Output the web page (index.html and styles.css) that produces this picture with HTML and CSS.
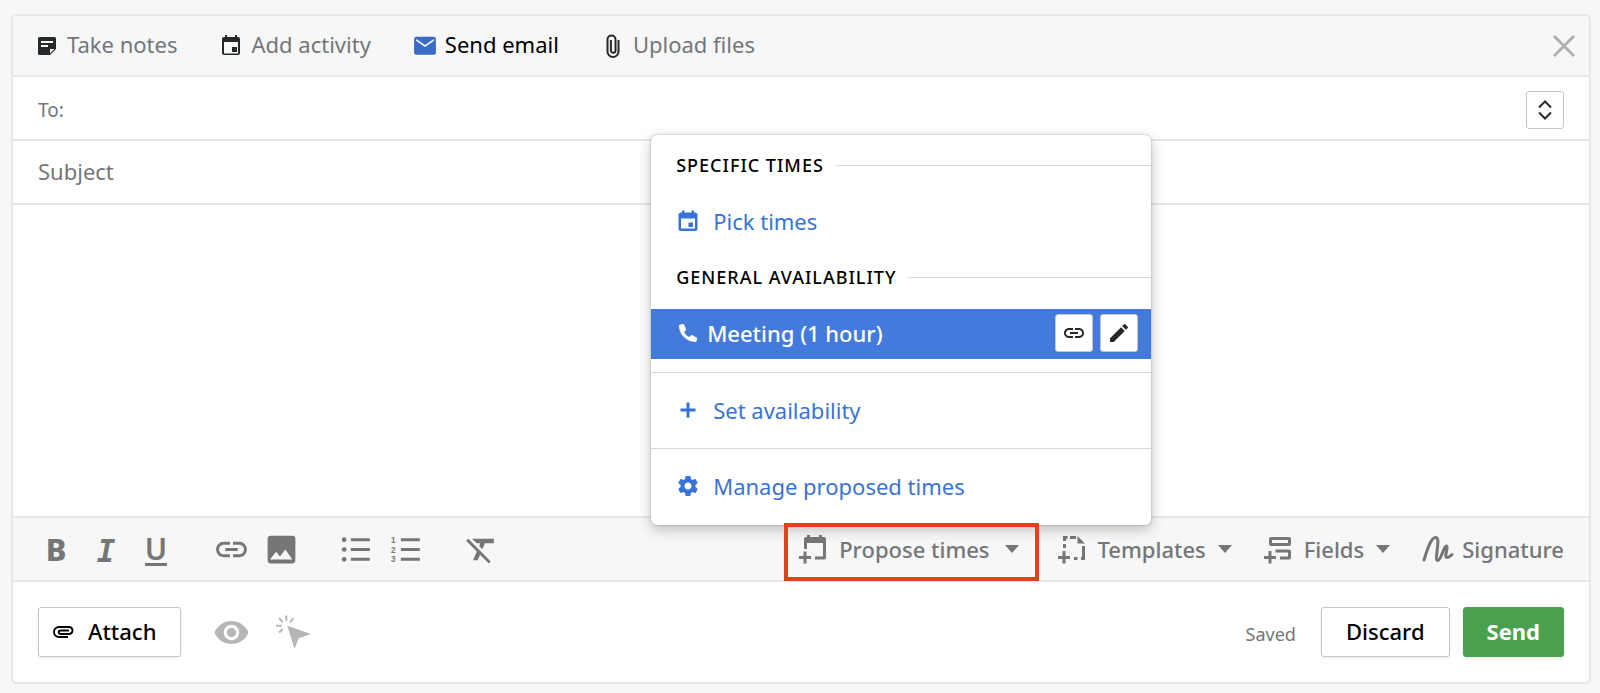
FILE: index.html
```
<!DOCTYPE html>
<html lang="en">
<head>
    <meta charset="UTF-8">
    <meta name="viewport" content="width=device-width, initial-scale=1.0">
    <title>Send email</title>
    <link rel="stylesheet" href="styles.css">
</head>
<body>
    <form class="composer">
        <nav class="tabs">
            <button type="button" class="tab">
                <svg class="icon-tab" viewBox="0 0 24 24"><path fill-rule="evenodd" d="M4.500 3h15A1.500 1.500 0 0 1 21 4.500V15l-6 6H4.500A1.500 1.500 0 0 1 3 19.500v-15A1.500 1.500 0 0 1 4.500 3zM6 7v2h12V7zM6 11v2h7v-2zM15 19.500L19.500 15H15z"/></svg>
                Take notes
            </button>
            <button type="button" class="tab">
                <svg class="icon-tab" viewBox="0 0 24 24"><path d="M18 13h-5v5h5v-5zM16 1v2H8V1H6v2H5c-1.110 0-1.990.9-1.990 2L3 19c0 1.100.89 2 2 2h14c1.100 0 2-.9 2-2V5c0-1.100-.9-2-2-2h-1V1h-2zm3 18.500H5V8h14v11.500z"/></svg>
                Add activity
            </button>
            <button type="button" class="tab tab-active">
                <svg class="icon-tab" viewBox="1 1 22 22"><path d="M20 3.500H4a2 2 0 0 0-2 2v13c0 1.100.9 1.500 2 1.500h16c1.100 0 2-.4 2-1.500v-13a2 2 0 0 0-2-2zm0 4l-8 5.500-8-5.500v-2l8 5.500 8-5.500v2z"/></svg>
                Send email
            </button>
            <button type="button" class="tab">
                <svg class="icon-tab" viewBox="0 0 24 24"><path class="line" d="M17.500 6v11.500a5.500 5.500 0 0 1-11 0V5.500a4 4 0 0 1 8 0v11a2.300 2.300 0 0 1-4.600 0V6"/></svg>
                Upload files
            </button>
            <button type="button" class="close" aria-label="Close">
                <svg viewBox="0 0 24 24"><path d="M2 2l20 20M22 2L2 22"/></svg>
            </button>
        </nav>

        <div class="row row-to">
            <label class="to-label" for="to">To:</label>
            <input id="to" type="text">
            <button type="button" class="square" aria-label="Show more fields">
                <svg viewBox="0 0 24 24"><path class="line" d="M6 9.500l6-6 6 6M6 14.500l6 6 6-6"/></svg>
            </button>
        </div>
        <div class="row row-subject">
            <input type="text" placeholder="Subject" aria-label="Subject">
        </div>
        <textarea class="message" aria-label="Message"></textarea>

        <div class="toolbar">
            <div class="tools">
                <button type="button" class="tool tool-bold" aria-label="Bold">B</button>
                <button type="button" class="tool tool-italic" aria-label="Italic">I</button>
                <button type="button" class="tool tool-underline" aria-label="Underline"><span>U</span></button>
            </div>
            <div class="tools">
                <button type="button" class="tool" aria-label="Link">
                    <svg viewBox="0 0 24 24"><path d="M3.900 12c0-1.710 1.390-3.100 3.100-3.100h4V7H7c-2.760 0-5 2.240-5 5s2.240 5 5 5h4v-1.900H7c-1.710 0-3.100-1.390-3.100-3.100zM8 13h8v-2H8v2zm9-6h-4v1.900h4c1.710 0 3.100 1.390 3.100 3.100s-1.390 3.100-3.100 3.100h-4V17h4c2.760 0 5-2.240 5-5s-2.240-5-5-5z"/></svg>
                </button>
                <button type="button" class="tool" aria-label="Image">
                    <svg viewBox="0 0 24 24"><path fill-rule="evenodd" d="M21 19V5a2 2 0 0 0-2-2H5a2 2 0 0 0-2 2v14a2 2 0 0 0 2 2h14a2 2 0 0 0 2-2zM4.500 18.500l4-5 2.500 3 3.500-4.500 4.500 6.500z"/></svg>
                </button>
            </div>
            <div class="tools">
                <button type="button" class="tool" aria-label="Bulleted list">
                    <svg viewBox="0 0 36 36"><circle cx="6" cy="8.500" r="2.300"/><circle cx="6" cy="18" r="2.300"/><circle cx="6" cy="27.500" r="2.300"/><path d="M12.500 7h18.500v3H12.500zM12.500 16.500h18.500v3H12.500zM12.500 26h18.500v3H12.500z"/></svg>
                </button>
                <button type="button" class="tool" aria-label="Numbered list">
                    <svg viewBox="0 0 36 36"><text x="3" y="11.500">1</text><text x="3" y="21">2</text><text x="3" y="30.500">3</text><path d="M12.500 7h18.500v3H12.500zM12.500 16.500h18.500v3H12.500zM12.500 26h18.500v3H12.500z"/></svg>
                </button>
            </div>
            <div class="tools">
                <button type="button" class="tool" aria-label="Clear formatting">
                    <svg viewBox="0 0 24 24"><path d="M3.270 5L2 6.270l6.970 6.970L6.500 19h3l1.570-3.660L16.730 21 18 19.730 3.550 5.270 3.270 5zM6 5v.18L8.820 8h2.400l-.72 1.680 2.100 2.100L14.210 8H20V5H6z"/></svg>
                </button>
            </div>

            <div class="inserts">
                <div class="propose">
                    <button type="button" class="insert insert-open">
                        <svg class="icon-insert" viewBox="0 0 28 30"><path d="M8 1h3v2h9V1h3v2h2a2 2 0 0 1 2 2v18.500a2 2 0 0 1-2 2h-9v-3h8V9H8v6H5V5a2 2 0 0 1 2-2h1zM4.500 17.500h3V22H12v3H7.500v4.500h-3V25H0v-3h4.500z"/></svg>
                        <span>Propose times</span>
                        <svg class="caret" viewBox="0 0 14 8"><path d="M0 0h14L7 8z"/></svg>
                    </button>
                    <div class="menu">
                        <div class="menu-heading">SPECIFIC TIMES</div>
                        <a class="menu-item" href="#">
                            <svg viewBox="0 0 24 24"><path fill-rule="evenodd" d="M6 1.500h2.500v2h7v-2H18v2h1a2.500 2.500 0 0 1 2.500 2.500v13.500A2.500 2.500 0 0 1 19 22H5a2.500 2.500 0 0 1-2.500-2.500V6A2.500 2.500 0 0 1 5 3.500h1zM5 9.500v10h14v-10zM12.500 13.500H17V18h-4.500z"/></svg>
                            Pick times
                        </a>
                        <div class="menu-heading">GENERAL AVAILABILITY</div>
                        <div class="menu-item menu-selected">
                            <svg viewBox="0 0 24 24"><path d="M8 3.500l2 4.500c.2.500 0 1-.4 1.400L8 11c1.200 2.200 2.900 3.900 5.200 5.100l1.700-1.700c.4-.4.900-.5 1.400-.2l4.300 2.200c.5.200.7.700.5 1.300l-.7 2.600c-.1.500-.5.700-1 .7C10.500 21 3 13.500 3 4.800c0-.5.200-.9.700-1l3-.8c.6-.1 1.100 0 1.300.5z"/></svg>
                            <span>Meeting (1 hour)</span>
                            <button type="button" class="square" aria-label="Copy link">
                                <svg viewBox="0 0 24 24"><path d="M3.900 12c0-1.710 1.390-3.100 3.100-3.100h4V7H7c-2.760 0-5 2.240-5 5s2.240 5 5 5h4v-1.900H7c-1.710 0-3.100-1.390-3.100-3.100zM8 13h8v-2H8v2zm9-6h-4v1.900h4c1.710 0 3.100 1.390 3.100 3.100s-1.390 3.100-3.100 3.100h-4V17h4c2.760 0 5-2.240 5-5s-2.240-5-5-5z"/></svg>
                            </button>
                            <button type="button" class="square" aria-label="Edit">
                                <svg viewBox="0 0 24 24"><path d="M3 17.250V21h3.750L17.810 9.940l-3.750-3.750L3 17.250zM20.710 7.040a1 1 0 0 0 0-1.410l-2.340-2.340a1 1 0 0 0-1.410 0l-1.830 1.830 3.750 3.750 1.830-1.830z"/></svg>
                            </button>
                        </div>
                        <div class="menu-section menu-section-first">
                            <a class="menu-item" href="#">
                                <svg viewBox="0 0 24 24"><path d="M10.500 4.500h3v6h6v3h-6v6h-3v-6h-6v-3h6z"/></svg>
                                Set availability
                            </a>
                        </div>
                        <div class="menu-section">
                            <a class="menu-item" href="#">
                                <svg viewBox="0 0 24 24"><path d="M19.430 12.980c.04-.32.07-.64.07-.98s-.03-.66-.07-.98l2.110-1.650c.19-.15.24-.42.12-.64l-2-3.460c-.12-.22-.39-.3-.61-.22l-2.490 1c-.52-.4-1.080-.73-1.690-.98l-.38-2.650C14.460 2.180 14.250 2 14 2h-4c-.25 0-.46.18-.49.42l-.38 2.650c-.61.25-1.170.59-1.690.98l-2.490-1c-.23-.09-.49 0-.61.22l-2 3.460c-.13.22-.07.49.12.64l2.110 1.650c-.04.32-.07.65-.07.98s.03.66.07.98l-2.110 1.650c-.19.15-.24.42-.12.64l2 3.460c.12.22.39.3.61.22l2.490-1c.52.4 1.080.73 1.690.98l.38 2.650c.03.24.24.42.49.42h4c.25 0 .46-.18.49-.42l.38-2.650c.61-.25 1.170-.59 1.690-.98l2.490 1c.23.09.49 0 .61-.22l2-3.460c.12-.22.07-.49-.12-.64l-2.110-1.650zM12 15.500c-1.930 0-3.500-1.570-3.500-3.500s1.570-3.500 3.500-3.500 3.500 1.570 3.500 3.500-1.570 3.500-3.500 3.500z"/></svg>
                                Manage proposed times
                            </a>
                        </div>
                    </div>
                </div>
                <button type="button" class="insert">
                    <svg class="icon-insert" viewBox="0 0 28 30"><path d="M5 2h4.500v3H8v2H5zM12 2h6v3h-6zM19.500 2L27 9.500h-7.500zM5 10h3v4H5zM4.500 17h3v5H12v3H7.500v4.500h-3V25H0v-3h4.500zM24 12h3v14h-4v-3h1zM16 23h3.500v3H16z"/></svg>
                    <span>Templates</span>
                    <svg class="caret" viewBox="0 0 14 8"><path d="M0 0h14L7 8z"/></svg>
                </button>
                <button type="button" class="insert">
                    <svg class="icon-insert" viewBox="0 0 28 30"><path fill-rule="evenodd" d="M7 3h18a2 2 0 0 1 2 2v5a2 2 0 0 1-2 2H7a2 2 0 0 1-2-2V5a2 2 0 0 1 2-2zm1 3v3h16V6zM4.500 17h3v5H12v3H7.500v4.500h-3V25H0v-3h4.500zM11.500 15.500H25a2 2 0 0 1 2 2v6a2 2 0 0 1-2 2h-9v-3h8v-4H11.500z"/></svg>
                    <span>Fields</span>
                    <svg class="caret" viewBox="0 0 14 8"><path d="M0 0h14L7 8z"/></svg>
                </button>
                <button type="button" class="insert insert-signature">
                    <svg class="icon-signature" viewBox="0 0 32 28"><path d="M2 25C5 15 9 2 14 2.500c5 .5-2 22.500 1.500 23S22 10 24.500 11s-3 11 .5 11.500c2 0 3.500-1.500 5-3"/></svg>
                    <span>Signature</span>
                </button>
            </div>
        </div>

        <footer class="actions">
            <button type="button" class="button button-attach">
                <svg viewBox="0 0 24 24"><path class="line" d="M17 18H8a5 5 0 0 1 0-10h10a3.500 3.500 0 0 1 0 7H9.500a1.500 1.500 0 0 1 0-3.500H18"/></svg>
                Attach
            </button>
            <button type="button" class="tool tool-muted" aria-label="Track opens">
                <svg viewBox="0 0 24 24"><path d="M12 4.500C7 4.500 2.730 7.610 1 12c1.730 4.390 6 7.500 11 7.500s9.270-3.110 11-7.500c-1.730-4.390-6-7.500-11-7.500zM12 17c-2.760 0-5-2.240-5-5s2.240-5 5-5 5 2.240 5 5-2.240 5-5 5zm0-8c-1.660 0-3 1.340-3 3s1.340 3 3 3 3-1.340 3-3-1.340-3-3-3z"/></svg>
            </button>
            <button type="button" class="tool tool-muted" aria-label="Track clicks">
                <svg viewBox="0 0 36 36"><path d="M12 11.500l23 8-12 4-4 10.500z"/><path class="rays" d="M11 1.500v5M4 4l3.500 4M18 4l-3.500 4M1 11.500h5.500M4 18l3.500-3.500"/></svg>
            </button>
            <span class="saved">Saved</span>
            <button type="button" class="button">Discard</button>
            <button type="submit" class="button button-send">Send</button>
        </footer>
    </form>
</body>
</html>
```
FILE: styles.css
```
* {
    box-sizing: border-box;
}

body {
    margin: 0;
    min-height: 100vh;
    padding: 14px 9px 9px 11px;
    display: flex;
    background-color: #f7f7f7;
    font-family: "Noto Sans", sans-serif;
    font-size: 22px;
    line-height: 30px;
    color: #000;
}

button,
input,
textarea {
    font: inherit;
    color: inherit;
    margin: 0;
    padding: 0;
    border: 0;
    background: none;
}

button {
    cursor: pointer;
}

svg {
    display: block;
    flex: none;
    fill: currentColor;
}

.line {
    fill: none;
    stroke: currentColor;
    stroke-width: 2;
}

.composer {
    flex: 1;
    min-width: 0;
    display: flex;
    flex-direction: column;
    background-color: #fff;
    border: 2px solid #e7e7e7;
    border-radius: 6px;
}

/* Tabs */
.tabs {
    display: flex;
    align-items: center;
    gap: 42px;
    height: 61px;
    padding: 0 13px 3px 22px;
    background-color: #f7f7f7;
    border-bottom: 2px solid #e7e7e7;
    border-radius: 4px 4px 0 0;
}

.tab {
    display: flex;
    align-items: center;
    gap: 8px;
    color: #747678;
    white-space: nowrap;
}

.icon-tab {
    width: 24px;
    height: 24px;
    margin-top: 3px;
    color: #26292c;
}

.tab-active {
    color: #000;
}

.tab-active .icon-tab {
    color: #3a6bc6;
}

.close {
    margin: 3px 0 0 auto;
    color: #b0b0b0;
}

.close svg {
    width: 24px;
    height: 24px;
    stroke: currentColor;
    stroke-width: 3;
}

/* Fields */
.row {
    display: flex;
    align-items: center;
    gap: 8px;
    height: 64px;
    padding: 0 25px;
    border-bottom: 2px solid #e7e7e7;
}

.row-to {
    padding-top: 3px;
}

.row-subject {
    padding-bottom: 3px;
}

.row input {
    flex: 1;
    min-width: 0;
    outline: none;
}

.row input::placeholder {
    color: #747678;
    opacity: 1;
}

.to-label {
    font-size: 19px;
    color: #747678;
}

.square {
    width: 38px;
    height: 38px;
    display: flex;
    align-items: center;
    justify-content: center;
    background-color: #fff;
    border: 1px solid #c4c6c8;
    border-radius: 3px;
    color: #26292c;
}

.square svg {
    width: 24px;
    height: 24px;
}

.message {
    flex: 1;
    min-height: 120px;
    padding: 16px 25px;
    resize: none;
    outline: none;
}

/* Toolbar */
.toolbar {
    display: flex;
    align-items: center;
    gap: 25px;
    height: 66px;
    padding: 0 25px 0 18px;
    background-color: #f7f7f7;
    border-top: 2px solid #e7e7e7;
    border-bottom: 2px solid #e7e7e7;
    color: #747678;
}

.tools {
    display: flex;
}

.tool {
    width: 50px;
    height: 50px;
    display: flex;
    align-items: center;
    justify-content: center;
}

.tool svg {
    width: 37px;
    height: 37px;
}

.tool text {
    font-family: "Liberation Sans", sans-serif;
    font-size: 8px;
    font-weight: 700;
}

.tool-bold {
    font-size: 31px;
    font-weight: 800;
}

.tool-italic {
    padding-top: 4px;
    font-family: "DejaVu Sans Mono", monospace;
    font-size: 31px;
    font-weight: 700;
    font-style: italic;
}

.tool-underline {
    padding-top: 4px;
    font-size: 30px;
    font-weight: 600;
}

.tool-underline span {
    height: 30px;
    line-height: 26px;
    border-bottom: 3px solid currentColor;
}

.inserts {
    display: flex;
    align-items: center;
    gap: 32px;
    margin-left: auto;
}

.insert {
    display: flex;
    align-items: center;
    gap: 12px;
    padding-bottom: 1px;
    font-weight: 500;
    white-space: nowrap;
}

.insert-open {
    position: relative;
    z-index: 2;
    height: 58px;
    padding: 0 16px 6px 11px;
    border: 4px solid #e4401c;
}

.insert-open .caret {
    margin-left: 3px;
}

.insert-signature {
    gap: 8px;
}

.icon-insert {
    width: 28px;
    height: 30px;
}

.icon-signature {
    width: 32px;
    height: 28px;
    fill: none;
    stroke: currentColor;
    stroke-width: 3;
    stroke-linecap: round;
}

.caret {
    width: 14px;
    height: 8px;
}

/* Propose times menu */
.propose {
    position: relative;
    margin: 5px -13px 0 0;
}

.menu {
    position: absolute;
    z-index: 1;
    left: -133px;
    bottom: 56px;
    width: 500px;
    padding-bottom: 1px;
    background-color: #fff;
    border-radius: 6px;
    box-shadow: 0 0 2px rgba(0, 0, 0, 0.3), 0 4px 14px rgba(0, 0, 0, 0.25);
    color: #000;
}

.menu-heading {
    display: flex;
    align-items: center;
    gap: 12px;
    height: 62px;
    padding: 0 0 1px 25px;
    font-size: 18px;
    font-weight: 500;
    letter-spacing: 1px;
    white-space: nowrap;
}

.menu-heading::after {
    content: "";
    flex: 1;
    height: 1px;
    background-color: #d8d8d8;
}

.menu-item {
    display: flex;
    align-items: center;
    gap: 13px;
    height: 50px;
    padding: 0 13px 2px 25px;
    color: #3973d6;
    text-decoration: none;
}

.menu-item > svg {
    width: 24px;
    height: 24px;
}

.menu-selected {
    gap: 7px;
    background-color: #447adb;
    color: #fff;
    font-weight: 500;
}

.menu-selected span {
    margin-right: auto;
}

.menu-section {
    padding: 13px 0 12px;
    border-top: 1px solid #d8d8d8;
}

.menu-section-first {
    margin-top: 13px;
}

/* Footer */
.actions {
    display: flex;
    align-items: center;
    height: 100px;
    padding: 0 25px;
}

.button {
    display: flex;
    align-items: center;
    height: 50px;
    padding: 0 24px 2px;
    background-color: #fff;
    border: 1px solid #c4c6c8;
    border-radius: 3px;
    box-shadow: 0 1px 3px rgba(0, 0, 0, 0.08);
    font-weight: 500;
}

.button-attach {
    gap: 13px;
    padding-left: 12px;
    margin-right: 25px;
}

.button-attach svg {
    width: 24px;
    height: 24px;
}

.button-send {
    margin-left: 13px;
    padding: 0 23px 2px;
    background-color: #4aa14d;
    border-color: #4aa14d;
    color: #fff;
    font-weight: 700;
}

.tool-muted {
    color: #b5b6b8;
    margin-right: 12px;
}

.rays {
    fill: none;
    stroke: currentColor;
    stroke-width: 2;
}

.saved {
    margin: 0 25px 0 auto;
    padding-top: 3px;
    font-size: 18px;
    color: #747678;
}
```
